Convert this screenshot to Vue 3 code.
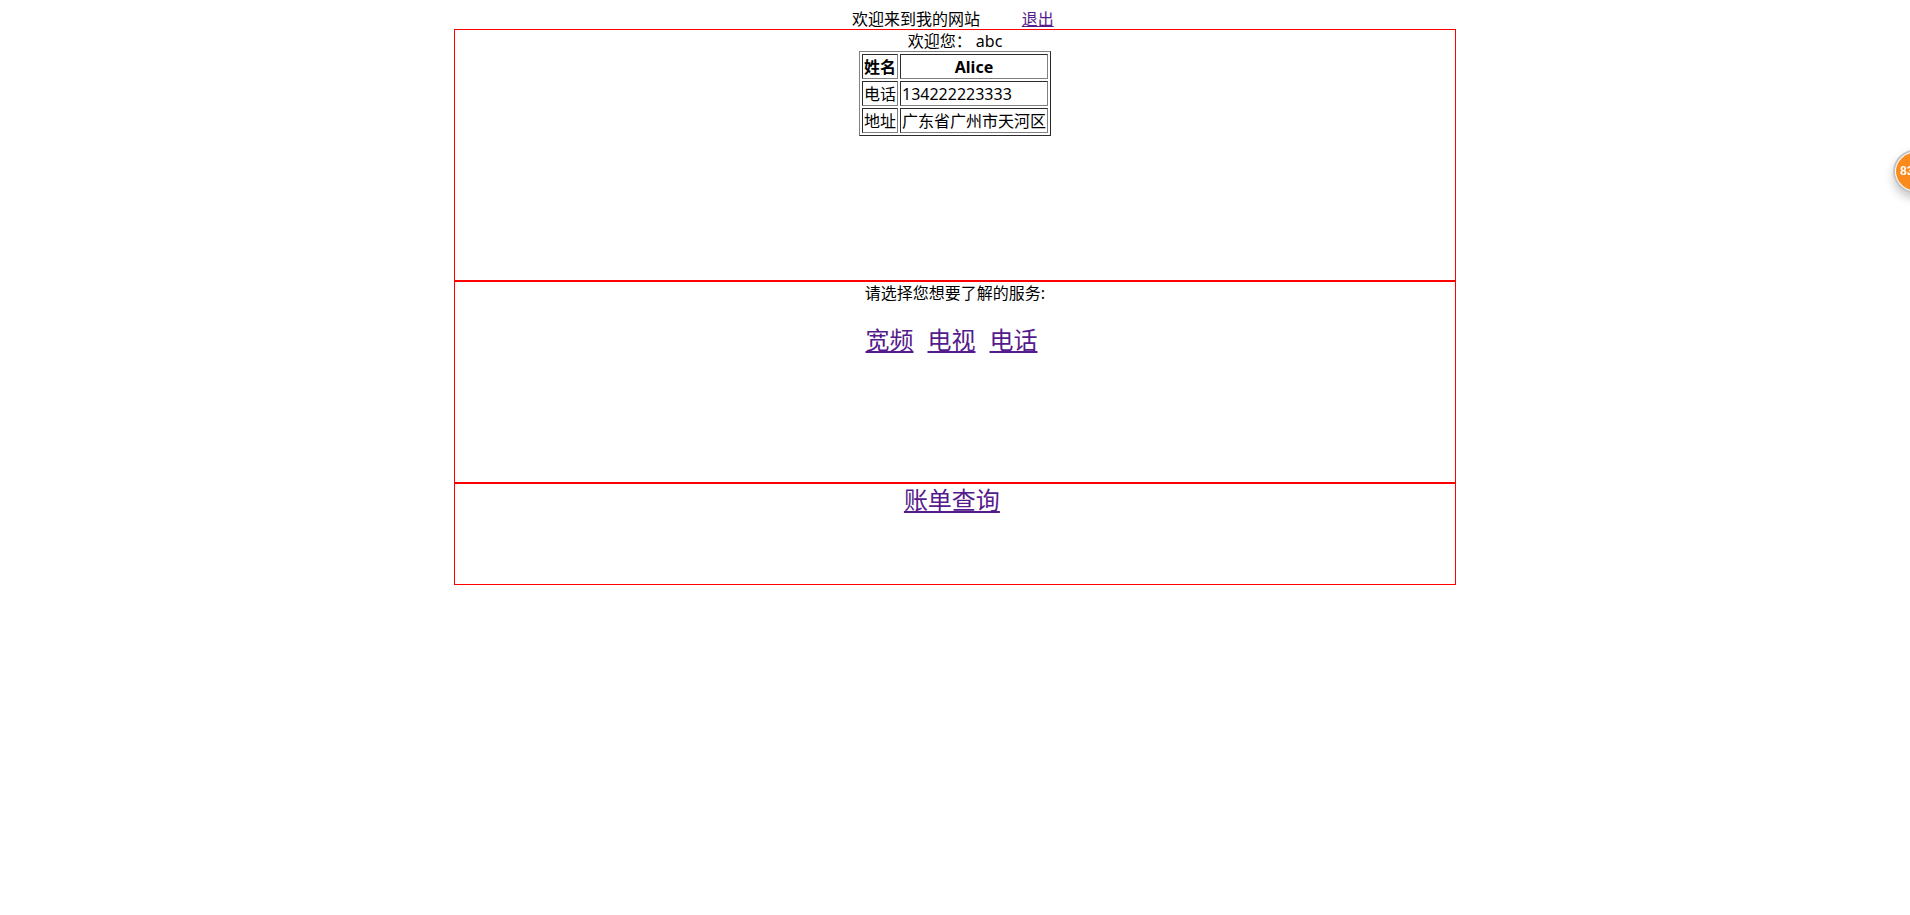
<script setup>
const rows = [
  { label: '电话', value: '134222223333' },
  { label: '地址', value: '广东省广州市天河区' },
]
</script>

<template>
  <div class="page">
    <div class="top">欢迎来到我的网站&nbsp;&nbsp;&nbsp;&nbsp;&nbsp;&nbsp;&nbsp;&nbsp;&nbsp;&nbsp;<a href="#" class="link">退出</a>&nbsp;</div>
    <section class="box box-user">
      <div class="hello">欢迎您： abc</div>
      <table class="info" border="1">
        <thead>
          <tr><th>姓名</th><th>Alice</th></tr>
        </thead>
        <tbody>
          <tr v-for="row in rows" :key="row.label">
            <td>{{ row.label }}</td>
            <td>{{ row.value }}</td>
          </tr>
        </tbody>
      </table>
    </section>
    <section class="box box-service">
      <div class="hello">请选择您想要了解的服务:</div>
      <div class="services">
        <a href="#" class="link">宽频</a>&nbsp;&nbsp;<a href="#" class="link">电视</a>&nbsp;&nbsp;<a href="#" class="link">电话</a>&nbsp;
      </div>
    </section>
    <section class="box box-bill">
      <a href="#" class="link big">账单查询</a>&nbsp;
    </section>
    <div class="badge"><span>83</span></div>
  </div>
</template>

<style scoped>
.page {
  font-family: "Noto Sans", "Noto Sans CJK SC", sans-serif;
  font-size: 16px;
  line-height: 21px;
  color: #000;
  text-align: center;
  padding-top: 8px;
}
.top {
  box-sizing: border-box;
  height: 21px;
  padding-top: 1px;
}
.link {
  color: #551a8b;
  text-decoration: underline;
}
.box {
  box-sizing: content-box;
  width: 1000px;
  margin: 0 auto;
  border: 1px solid #f00;
}
.box-user { height: 250px; }
.box-service { height: 200px; }
.box-bill { height: 100px; font-size: 24px; line-height: 32px; }
.hello {
  box-sizing: border-box;
  height: 21px;
  padding-top: 1px;
}
.info {
  margin: 0 auto;
  border-spacing: 2px;
  border-collapse: separate;
  line-height: 21px;
}
.info th, .info td { padding: 2px 1px 0; }
.info th { font-weight: 700; text-align: center; }
.info td { text-align: left; }
.services {
  margin-top: 21px;
  font-size: 24px;
  line-height: 32px;
  word-spacing: 0.75px;
}
.badge {
  position: fixed;
  top: 152px;
  left: 1896px;
  width: 39px;
  height: 39px;
  border-radius: 50%;
  background: #fb8a1c;
  box-shadow: 0 0 0 1px #fff, 0 0 0 3px #c4c4c4, 0 5px 10px 3px rgba(0, 0, 0, 0.22);
  color: #fff;
  font-family: "Liberation Sans", sans-serif;
  font-size: 12px;
  font-weight: 700;
  line-height: 38px;
  text-align: left;
  padding-left: 4px;
  white-space: nowrap;
}
</style>

<style>
html, body { overflow: hidden; }
</style>
